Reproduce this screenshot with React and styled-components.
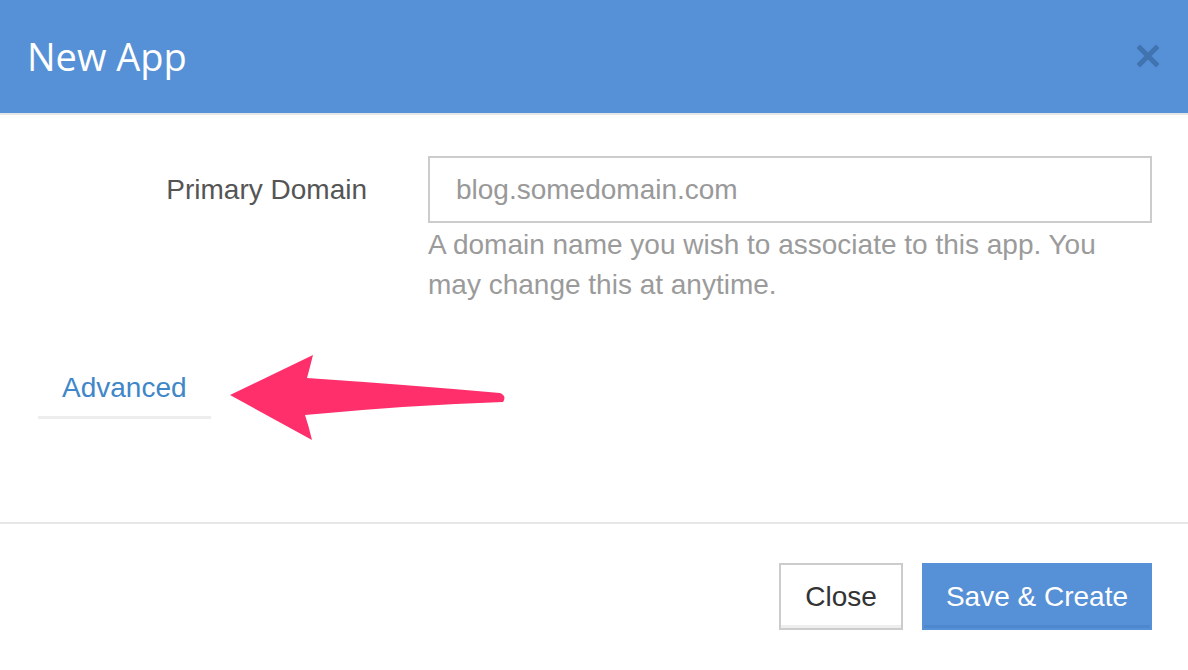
import styled, { createGlobalStyle } from 'styled-components';

const GlobalStyle = createGlobalStyle`
    *, *::before, *::after {
        box-sizing: border-box;
    }
    html, body {
        margin: 0;
        padding: 0;
        background: #fff;
    }
    body {
        font-family: "Liberation Sans", Arial, sans-serif;
    }
`;

const Modal = styled.div`
    width: 1188px;
    height: 670px;
    display: flex;
    flex-direction: column;
    background: #fff;
    overflow: hidden;
`;

const Header = styled.header`
    height: 115px;
    flex-shrink: 0;
    display: flex;
    align-items: center;
    justify-content: space-between;
    padding: 0 28px 0 27px;
    background-color: #5690d6;
    border-bottom: 2px solid #e6e6e6;
`;

const Title = styled.h1`
    margin: 0;
    font-family: "Open Sans", sans-serif;
    font-size: 38px;
    font-weight: 400;
    color: #fff;
    line-height: 1;
    padding-bottom: 2px;
`;

const CloseX = styled.button`
    width: 24px;
    height: 24px;
    padding: 0;
    border: none;
    background: transparent;
    cursor: pointer;
    display: flex;
    align-items: center;
    justify-content: center;
    margin-bottom: 2px;
`;

const Body = styled.div`
    position: relative;
    flex: 1;
    padding-top: 41px;
`;

const FormRow = styled.div`
    display: grid;
    grid-template-columns: 367px 724px;
    column-gap: 61px;
    align-items: start;
`;

const Label = styled.label`
    height: 67px;
    display: flex;
    align-items: center;
    justify-content: flex-end;
    font-size: 28px;
    color: #555;
`;

const Field = styled.div`
    display: flex;
    flex-direction: column;
`;

const Input = styled.input`
    width: 100%;
    height: 67px;
    padding: 0 26px;
    border: 2px solid #cccccc;
    border-radius: 0;
    font-family: "Liberation Sans", Arial, sans-serif;
    font-size: 28px;
    color: #555;
    outline: none;

    &::placeholder {
        color: #999;
    }
`;

const Help = styled.p`
    margin: 2px 0 0;
    font-size: 28px;
    line-height: 40px;
    color: #9b9b9b;
`;

const Tabs = styled.div`
    display: flex;
    margin: 63px 0 0 38px;
`;

const Tab = styled.a`
    padding: 0 24px 8px;
    font-size: 28px;
    line-height: 40px;
    color: #3f87c8;
    text-decoration: none;
    border-bottom: 3px solid #ededed;
    cursor: pointer;
`;

const Pointer = styled.svg`
    position: absolute;
    left: 220px;
    top: 230px;
`;

const Footer = styled.footer`
    height: 148px;
    flex-shrink: 0;
    border-top: 2px solid #e6e6e6;
    display: flex;
    justify-content: flex-end;
    align-items: flex-start;
    gap: 19px;
    padding: 39px 36px 0 0;
`;

const Btn = styled.button`
    height: 67px;
    padding: 0;
    font-family: "Liberation Sans", Arial, sans-serif;
    font-size: 28px;
    white-space: nowrap;
    cursor: pointer;
    border-radius: 0;
    border: 2px solid ${p => (p.$primary ? '#5690d6' : '#cccccc')};
    background: ${p => (p.$primary ? '#5690d6' : '#fff')};
    color: ${p => (p.$primary ? '#fff' : '#333')};
    box-shadow: inset 0 -3px 0 ${p => (p.$primary ? '#4f87cf' : '#eeeeee')};
    width: ${p => p.$width}px;
`;

export default function App() {
    return (
        <>
            <GlobalStyle />
            <Modal>
                <Header>
                    <Title>New App</Title>
                    <CloseX aria-label="close">
                        <svg width="22" height="22" viewBox="0 0 22 22">
                            <path d="M3 3 L19 19 M19 3 L3 19" stroke="#3e6fab" strokeWidth="5" strokeLinecap="square" opacity="0.85" />
                        </svg>
                    </CloseX>
                </Header>
                <Body>
                    <FormRow>
                        <Label htmlFor="domain">Primary Domain</Label>
                        <Field>
                            <Input id="domain" placeholder="blog.somedomain.com" />
                            <Help>A domain name you wish to associate to this app. You may change this at anytime.</Help>
                        </Field>
                    </FormRow>
                    <Tabs>
                        <Tab>Advanced</Tab>
                    </Tabs>
                    <Pointer width="300" height="105" viewBox="0 0 300 105">
                        <path
                            d="M10 50 L93 10 Q90 22 87 33 Q190 40 280 48 Q287 51 283 57 Q190 60 85 70 Q89 82 92 95 Z"
                            fill="#ff2f6c"
                        />
                    </Pointer>
                </Body>
                <Footer>
                    <Btn $width={124}>Close</Btn>
                    <Btn $primary $width={230}>Save &amp; Create</Btn>
                </Footer>
            </Modal>
        </>
    );
}
